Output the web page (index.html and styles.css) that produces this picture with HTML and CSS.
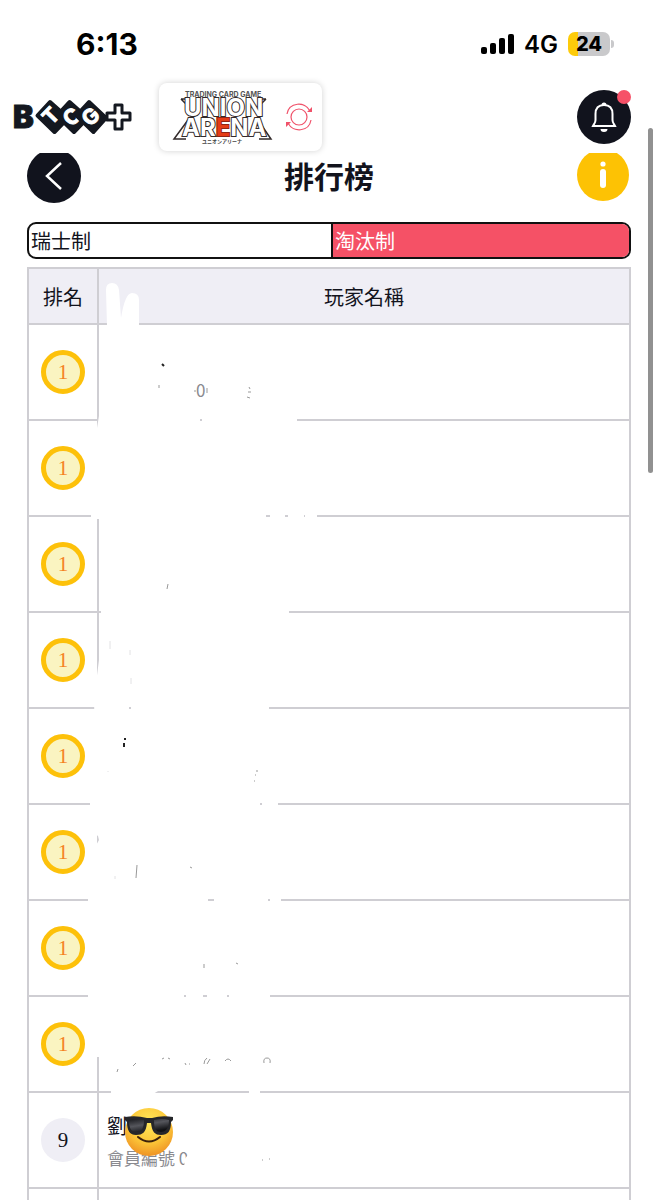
FILE: index.html
```html
<!DOCTYPE html>
<html lang="zh-Hant">
<head>
    <meta charset="UTF-8">
    <meta name="viewport" content="width=device-width, initial-scale=1.0">
    <title>排行榜</title>
    <link rel="stylesheet" href="styles.css">
</head>
<body>
    <div class="screen">
        <div class="status-bar">
            <span class="time">6:13</span>
            <div class="status-icons">
                <svg class="signal" width="34" height="22" viewBox="0 0 34 22">
                    <rect x="0" y="14" width="6" height="7" rx="2"/>
                    <rect x="9" y="10" width="6" height="11" rx="2"/>
                    <rect x="18" y="5" width="6" height="16" rx="2"/>
                    <rect x="27" y="1" width="6" height="20" rx="2"/>
                </svg>
                <span class="network">4G</span>
                <span class="battery">24</span>
            </div>
        </div>

        <header class="header">
            <a href="#" class="logo" aria-label="BTCG+">
                <svg width="122" height="40" viewBox="11 96 122 40">
                    <text class="logo-b" x="13" y="127">B</text>
                    <path class="logo-tile" d="M50 101L37.500 114.500L54.500 131L68 117Z"/>
                    <text class="logo-letter" transform="translate(51 115) rotate(-46)" y="7">T</text>
                    <path class="logo-edge" d="M50 101L37.500 114.500L54.500 131L68 117Z"/>
                    <path class="logo-tile" d="M69.500 101L57 114.500L74 131L87.500 117Z"/>
                    <text class="logo-letter" transform="translate(72 116) rotate(-46)" y="7">C</text>
                    <path class="logo-edge" d="M69.500 101L57 114.500L74 131L87.500 117Z"/>
                    <path class="logo-tile" d="M89 101L76.500 114.500L93.500 131L106 117Z"/>
                    <text class="logo-letter" transform="translate(91 116) rotate(-46)" y="7">G</text>
                    <path class="logo-edge" d="M89 101L76.500 114.500L93.500 131L106 117Z"/>
                    <path class="logo-plus" d="M115 104h7v8h8v7h-8v9h-7v-9h-8v-7h8z"/>
                </svg>
            </a>
            <button class="game-switch" aria-label="UNION ARENA">
                <svg width="102" height="58" viewBox="172 88 102 58">
                    <text class="ua-small" x="185" y="97">TRADING CARD GAME</text>
                    <path class="ua-line" d="M181 99h6M181 99l5 5v6M266 99h-6M266 99l-5 5v6M188 120L174 139h12M258 120L271 139h-12"/>
                    <text class="ua-big" x="184" y="116">UNION</text>
                    <text class="ua-big" x="182" y="136">AR<tspan class="ua-red">E</tspan>NA</text>
                    <text class="ua-kana" x="202" y="143">ユニオンアリーナ</text>
                </svg>
                <svg class="swap" width="28" height="30" viewBox="0 0 28 30">
                    <circle cx="14" cy="15" r="8"/>
                    <path d="M2 12C4 0 20-1 25 9M26 18C24 30 8 31 3 21"/>
                    <path class="swap-tip" d="M22 10h5V5zM6 20H1v5z"/>
                </svg>
            </button>
            <button class="round-btn bell" aria-label="通知">
                <svg width="28" height="32" viewBox="0 0 28 32">
                    <path class="bell-line" d="M14 4C8 4 5.500 8 5.500 13v6C5.500 22 4 23 3 25h22c-1-2-2.500-3-2.500-6v-6C22.500 8 20 4 14 4z"/>
                    <path class="bell-fill" d="M11.500 4a2.500 2.500 0 0 1 5 0zM10.500 28h7a3.500 3 0 0 1-7 0z"/>
                </svg>
                <span class="badge"></span>
            </button>
        </header>

        <main class="content">
            <div class="title-row">
                <button class="round-btn" aria-label="返回">
                    <svg class="chevron" width="18" height="28" viewBox="0 0 18 28">
                        <path d="M16 1L2 14L16 27"/>
                    </svg>
                </button>
                <h1>排行榜</h1>
                <button class="info-btn" aria-label="說明">
                    <svg width="8" height="28" viewBox="0 0 8 28">
                        <circle cx="4" cy="3" r="2.600"/>
                        <rect x="1" y="8" width="6" height="19" rx="3"/>
                    </svg>
                </button>
            </div>

            <div class="tabs">
                <button class="tab">瑞士制</button>
                <button class="tab active">淘汰制</button>
            </div>

            <div class="ranking">
                <table>
                    <thead>
                        <tr><th class="col-rank">排名</th><th>玩家名稱</th></tr>
                    </thead>
                    <tbody>
                        <tr><td><span class="rank first">1</span></td><td></td></tr>
                        <tr><td><span class="rank first">1</span></td><td></td></tr>
                        <tr><td><span class="rank first">1</span></td><td></td></tr>
                        <tr><td><span class="rank first">1</span></td><td></td></tr>
                        <tr><td><span class="rank first">1</span></td><td></td></tr>
                        <tr><td><span class="rank first">1</span></td><td></td></tr>
                        <tr><td><span class="rank first">1</span></td><td></td></tr>
                        <tr><td><span class="rank first">1</span></td><td></td></tr>
                        <tr>
                            <td><span class="rank">9</span></td>
                            <td>
                                <p class="player">劉</p>
                                <p class="member">會員編號 0</p>
                            </td>
                        </tr>
                        <tr><td></td><td></td></tr>
                    </tbody>
                </table>

                <!-- Hand-drawn cover over the player names -->
                <svg class="scribble" width="604" height="933" viewBox="27 267 604 933">
                    <path class="cover" d="M107 326L106 290Q106 283 112 283Q118 283 119 290L121 318Q125 293 132 293Q139 293 139 300L139 326L297 330L297 450L317 500L317 530L289 560L289 640L269 680L269 750L278 780L278 830L281 860L281 920L270 940L270 1050L274 1072L260 1080L260 1110L249 1110L249 1086L163 1088Q148 1098 130 1102L111 1096L111 1080L99 1074L99 1057L94 1057L88 1010L88 890L94 849L99 840L98 836L90 830L90 790L95 740L94 700L96 683L99 660L101 620L101 590L100 519L91 519L91 500L95 440L99 416L99 326Z"/>
                    <path class="cover" d="M190 1152Q230 1148 272 1161V1172H181Q186 1164 184 1160Z"/>
                    <path class="line-bit" d="M200 420h2M266 516h4M285 516h3M304 516h1M129 708h2M260 804h2M208 900h6M268 900h2M184 996h2M203 996h4M227 996h2"/>
                    <text class="member-bit" x="196" y="397">0</text>
                    <path class="dark-bit" d="M162 364l2 2M125 738v2M124 743v4"/>
                    <path class="grey-bit" d="M159 385v3M249 387l1 2M248 392h3M247 397l3 1M207 388v5M195 390v2M168 584l-1 5M257 770v2M255 775h1M254 781h1M137 865l-1 13M190 867l2 1M204 964v4M236 963l2 1M118 1069l-1 3M136 1063l-3 3M162 1059l2-1M168 1058l2 1M185 1063l1 2M189 1064h1M204 1064q0-4 3-6M210 1059l-3 5M225 1061q3-4 6 0M264 1063q-1-5 3-5q4 0 3 5M262 1160h1M269 1159h1"/>
                    <path class="faint-bit" d="M110 641v8M130 650v5M131 678v6M108 771v1M115 876v3"/>
                </svg>

                <svg class="emoji" width="50" height="52" viewBox="0 0 50 52">
                    <defs>
                        <radialGradient id="face" cx="50%" cy="30%" r="70%">
                            <stop offset="0" stop-color="#ffe85a"/>
                            <stop offset="0.600" stop-color="#fcc638"/>
                            <stop offset="1" stop-color="#ef9324"/>
                        </radialGradient>
                        <linearGradient id="lens" x2="0.500" y2="1">
                            <stop offset="0" stop-color="#18191d"/>
                            <stop offset="0.500" stop-color="#55565c"/>
                            <stop offset="1" stop-color="#111215"/>
                        </linearGradient>
                    </defs>
                    <circle cx="25" cy="26" r="24" fill="url(#face)"/>
                    <path d="M1 11Q12 9 23 12H28Q38 9 49 11V14L47 16C47 25 44 29 37 29C31 29 28 26 27 17H23C22 26 19 29 12 29C6 29 3 25 3 16L1 14Z" fill="#25262a"/>
                    <path d="M5 14Q12 12 20 14C20 23 17 26 12 26C7 26 5 22 5 14ZM30 14Q38 12 45 14C45 22 42 26 37 26C32 26 30 23 30 14Z" fill="url(#lens)"/>
                    <path d="M14 31Q25 40 36 31" fill="none" stroke="#3d220c" stroke-width="2" stroke-linecap="round"/>
                </svg>
            </div>
        </main>

        <div class="scroll-thumb"></div>
    </div>
</body>
</html>
```
FILE: styles.css
```css
* {
    margin: 0;
    padding: 0;
    box-sizing: border-box;
}
body {
    background: #fff;
    color: #12131c;
    font-family: "Noto Sans CJK TC", sans-serif;
    font-size: 20px;
}
button {
    border: none;
    background: none;
    color: inherit;
    font: inherit;
    cursor: pointer;
}
.screen {
    position: relative;
    display: flex;
    flex-direction: column;
    height: 100vh;
    overflow: hidden;
}

/* Status bar */
.status-bar {
    display: flex;
    justify-content: space-between;
    align-items: center;
    height: 80px;
    padding: 8px 48px 0 76px;
    font-family: Inter, sans-serif;
    color: #000;
}
.time {
    font-size: 30px;
    font-weight: 700;
}
.status-icons {
    display: flex;
    align-items: center;
}
.network {
    margin: 0 10px 0 9px;
    font-size: 24px;
    font-weight: 600;
}
.battery {
    position: relative;
    width: 42px;
    height: 24px;
    border-radius: 7px;
    background: linear-gradient(90deg, #fdcb0a 10px, #c9c9cb 10px);
    font-size: 20px;
    font-weight: 800;
    line-height: 24px;
    text-align: center;
}
.battery::after {
    content: "";
    position: absolute;
    top: 8px;
    right: -4px;
    width: 3px;
    height: 8px;
    border-radius: 0 3px 3px 0;
    background: #c9c9cb;
}

/* Header */
.header {
    display: flex;
    align-items: center;
    height: 73px;
    padding: 0 27px 0 11px;
}
.logo {
    display: flex;
    margin-right: 26px;
}
.logo-b {
    font: 900 31px Inter, sans-serif;
    fill: #141820;
    stroke: #141820;
    stroke-width: 1;
}
.logo-tile {
    fill: #141820;
    stroke: #141820;
    stroke-width: 4;
    stroke-linejoin: round;
}
.logo-letter {
    font: 700 21px Inter, sans-serif;
    fill: #fff;
    stroke: #fff;
    stroke-width: 1;
    text-anchor: middle;
}
.logo-edge {
    fill: none;
    stroke: #141820;
    stroke-width: 2;
    stroke-linejoin: round;
}
.logo-plus {
    fill: #fff;
    stroke: #141820;
    stroke-width: 3;
    stroke-linejoin: round;
}
.game-switch {
    display: flex;
    align-items: center;
    gap: 11px;
    width: 163px;
    height: 68px;
    padding-left: 13px;
    border-radius: 8px;
    background: #fff;
    box-shadow: 0 0 6px rgba(0, 0, 0, 0.18);
}
.ua-small {
    font: 700 7px Inter, sans-serif;
    fill: #555;
}
.ua-kana {
    font: 700 5px "Noto Sans CJK JP", sans-serif;
    fill: #444;
}
.ua-big {
    font: 700 24px Inter, sans-serif;
    fill: #fff;
    stroke: #332b2b;
    stroke-width: 2;
    paint-order: stroke;
}
.ua-red {
    fill: #e43b17;
    stroke: #8f2415;
}
.ua-line {
    fill: none;
    stroke: #332b2b;
    stroke-width: 1.5;
}
.swap {
    fill: none;
    stroke: #f0526a;
    stroke-width: 1.2;
}
.swap .swap-tip {
    fill: #f0526a;
    stroke: none;
}
.round-btn {
    position: relative;
    display: flex;
    justify-content: center;
    align-items: center;
    width: 54px;
    height: 54px;
    border-radius: 50%;
    background: #11131d;
}
.bell {
    margin-left: auto;
}
.bell-line {
    fill: none;
    stroke: #fff;
    stroke-width: 2;
}
.bell-fill {
    fill: #fff;
}
.badge {
    position: absolute;
    top: 0;
    right: 0;
    width: 14px;
    height: 14px;
    border-radius: 50%;
    background: #f65168;
}

/* Content, the top of the title row is scrolled under the header */
.content {
    flex: 1;
    overflow: hidden;
    padding: 0 27px;
}
.title-row {
    display: flex;
    justify-content: space-between;
    align-items: flex-start;
    height: 73px;
    margin-top: -4px;
}
h1 {
    font-size: 30px;
    font-weight: 700;
    line-height: 52px;
}
.chevron {
    fill: none;
    stroke: #fff;
    stroke-width: 2.5;
}
.info-btn {
    display: flex;
    justify-content: center;
    align-items: center;
    width: 52px;
    height: 52px;
    margin-right: 2px;
    border-radius: 50%;
    background: #fdc204;
}
.info-btn svg {
    fill: #fff;
}
.tabs {
    display: grid;
    grid-template-columns: 304fr 296fr;
    height: 37px;
    border: 2px solid #111;
    border-radius: 9px;
    overflow: hidden;
}
.tab {
    padding: 0 2px;
    line-height: 33px;
    text-align: left;
}
.tab.active {
    border-left: 2px solid #111;
    margin-left: -2px;
    background: #f55166;
    color: #fff;
}

/* Ranking table */
.ranking {
    position: relative;
    margin-top: 8px;
}
table {
    width: 100%;
    border-collapse: collapse;
    table-layout: fixed;
}
th, td {
    border: 2px solid #cfced3;
}
th {
    height: 56px;
    background: #efeef5;
    font-weight: 400;
}
.col-rank {
    width: 70px;
}
td {
    height: 96px;
    padding: 4px 8px 0;
}
.rank {
    display: block;
    width: 44px;
    height: 44px;
    margin: 0 auto;
    border-radius: 50%;
    background: #efeef5;
    font-family: "Liberation Serif", serif;
    font-size: 21px;
    line-height: 44px;
    text-align: center;
}
td:first-child {
    padding: 0;
}
.rank.first {
    border: 5px solid #fdc10a;
    background: #faf4c1;
    color: #f5831f;
    line-height: 34px;
}
.player {
    line-height: 32px;
}
.member {
    color: #8a8a8f;
    font-size: 17px;
    line-height: 32px;
}
.scribble {
    position: absolute;
    top: 0;
    left: 0;
}
.cover {
    fill: #fff;
}
.line-bit {
    stroke: #cfced3;
    stroke-width: 2;
}
.member-bit {
    font-size: 17px;
    fill: #8a8a8f;
}
.dark-bit {
    fill: none;
    stroke: #222;
    stroke-width: 2;
}
.grey-bit {
    fill: none;
    stroke: #999;
    stroke-width: 1;
}
.faint-bit {
    fill: none;
    stroke: #e2e2e4;
    stroke-width: 1;
}
.emoji {
    position: absolute;
    top: 839px;
    left: 97px;
}
.scroll-thumb {
    position: absolute;
    top: 128px;
    right: 5px;
    width: 5px;
    height: 345px;
    border-radius: 3px;
    background: #919191;
}
```
